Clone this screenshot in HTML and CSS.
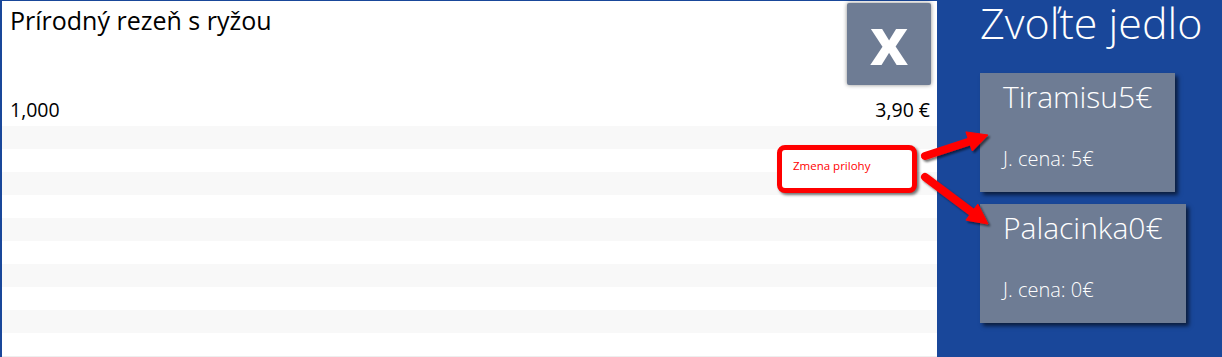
FILE: index.html
```html
<!DOCTYPE html>
<html lang="sk">
<head>
    <meta charset="UTF-8">
    <meta name="viewport" content="width=device-width, initial-scale=1.0">
    <title>Zvoľte jedlo</title>
    <link rel="stylesheet" href="styles.css">
</head>
<body>
    <div class="screen">
        <div class="order">
            <div class="order-head">
                <h1 class="item-name">Prírodný rezeň s ryžou</h1>
                <button class="close-btn">x</button>
            </div>
            <div class="item-line">
                <span>1,000</span>
                <span>3,90 €</span>
            </div>
            <div class="rows">
                <div class="row"></div>
                <div class="row"></div>
                <div class="row"></div>
                <div class="row"></div>
                <div class="row"></div>
                <div class="row"></div>
                <div class="row"></div>
                <div class="row"></div>
                <div class="row"></div>
                <div class="row"></div>
            </div>
        </div>

        <div class="menu">
            <h2>Zvoľte jedlo</h2>
            <div class="dish">
                <div class="dish-name">Tiramisu5€</div>
                <div class="dish-price">J. cena: 5€</div>
            </div>
            <div class="dish">
                <div class="dish-name">Palacinka0€</div>
                <div class="dish-price">J. cena: 0€</div>
            </div>
        </div>

        <!-- popis pre navod -->
        <div class="callout">Zmena prilohy</div>
        <svg class="arrows" width="1222" height="357" viewBox="0 0 1222 357">
            <defs>
                <filter id="shade" x="-20%" y="-20%" width="140%" height="140%">
                    <feDropShadow dx="2" dy="2" stdDeviation="1.2" flood-color="#000" flood-opacity="0.55"/>
                </filter>
            </defs>
            <g filter="url(#shade)" fill="#ff0000" stroke="#ff0000">
                <line x1="925" y1="156" x2="971" y2="141" stroke-width="8" stroke-linecap="round"/>
                <polygon points="988,135 972.3,151 965.9,131.9" stroke-width="1"/>
                <line x1="925" y1="177" x2="973" y2="213" stroke-width="8" stroke-linecap="round"/>
                <polygon points="988,224 965.9,220.1 977.8,204.1" stroke-width="1"/>
            </g>
        </svg>
    </div>
</body>
</html>
```

FILE: styles.css
```css
body {
    margin: 0;
    font-family: 'Open Sans', 'Noto Sans', sans-serif;
    background-color: #fff;
}

.screen {
    position: relative;
    display: flex;
    width: 1222px;
    height: 357px;
    overflow: hidden;
}

.order {
    width: 935px;
    border-left: 2px solid #19479a;
    border-top: 1px solid #19479a;
    background-color: #fff;
}

.order-head {
    display: flex;
    justify-content: space-between;
    align-items: flex-start;
    height: 84px;
}

.item-name {
    margin: 2px 0 0 8px;
    font-size: 25px;
    font-weight: normal;
    line-height: 34px;
    color: #000;
}

.close-btn {
    display: flex;
    justify-content: center;
    align-items: center;
    width: 84px;
    height: 82px;
    margin: 2px 6px 0 0;
    padding: 0 0 10px;
    border: none;
    border-radius: 2px;
    background-color: #6e7c94;
    box-shadow: 0 0 4px rgba(0, 0, 0, 0.45);
    color: #fff;
    font-family: 'Open Sans', sans-serif;
    font-size: 66px;
    font-weight: bold;
    line-height: 1;
}

.item-line {
    display: flex;
    justify-content: space-between;
    align-items: flex-end;
    height: 41px;
    box-sizing: border-box;
    padding: 0 7px 5px 8px;
    font-size: 19.5px;
    line-height: 22px;
    color: #000;
}

.rows {
    border-bottom: 1px solid #eee;
}

.row {
    height: 23px;
}

.row:nth-child(odd) {
    background-color: #f8f8f8;
}

.menu {
    flex: 1;
    background-color: #19479a;
    padding-left: 43px;
    color: #fff;
}

.menu h2 {
    margin: 1px 0 0;
    font-size: 43px;
    font-weight: 300;
    line-height: 44px;
}

.dish {
    width: fit-content;
    height: 119px;
    box-sizing: border-box;
    padding: 4px 23px 0;
    margin-top: 12px;
    background-color: #6e7c94;
    box-shadow: 3px 3px 4px rgba(0, 0, 0, 0.6);
}

.menu h2 + .dish {
    margin-top: 28px;
}

.dish-name {
    font-size: 30px;
    font-weight: 300;
    line-height: 40px;
}

.dish-price {
    margin-top: 28px;
    font-size: 20px;
    font-weight: 300;
}

.callout {
    position: absolute;
    left: 777px;
    top: 145px;
    width: 140px;
    height: 48px;
    box-sizing: border-box;
    padding: 8px 0 0 11px;
    border: 5px solid #ff0000;
    border-radius: 8px;
    background-color: #fff;
    box-shadow: 2px 2px 3px rgba(0, 0, 0, 0.55);
    color: #ff0000;
    font-size: 11.5px;
}

.arrows {
    position: absolute;
    left: 0;
    top: 0;
    pointer-events: none;
}
```
